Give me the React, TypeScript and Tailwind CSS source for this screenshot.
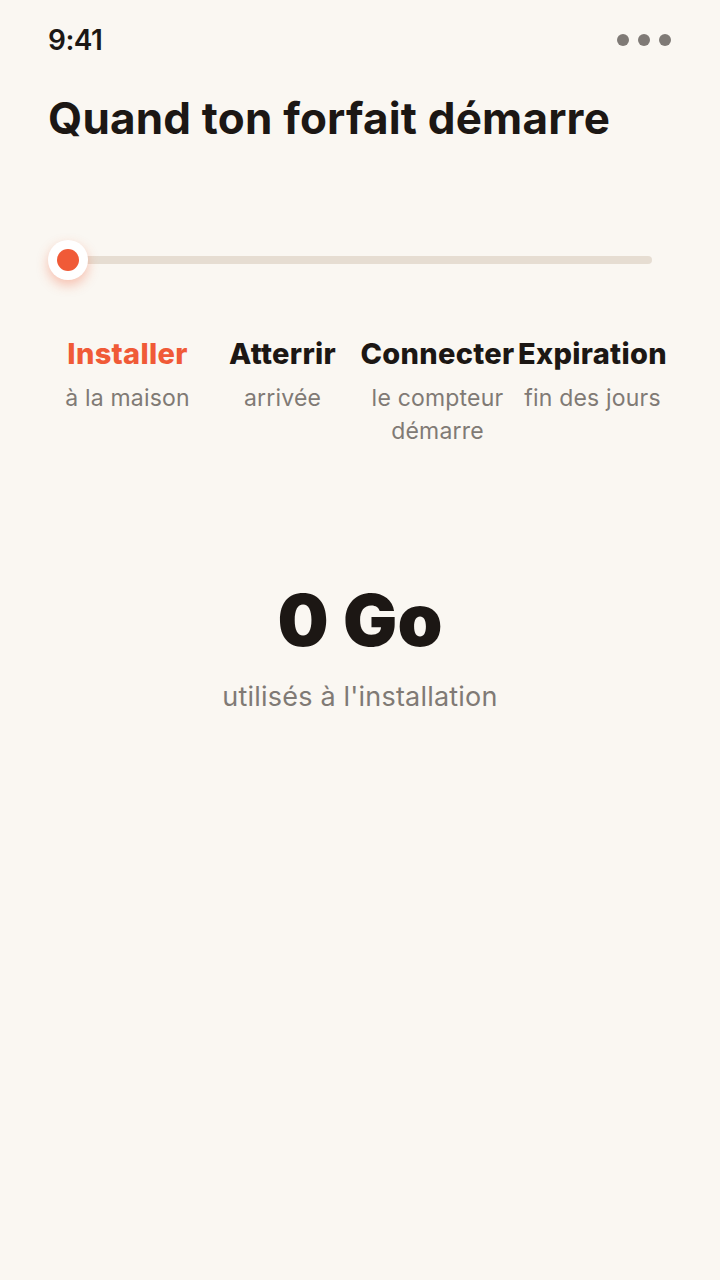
const steps = [
  { title: 'Installer', sub: 'à la maison', active: true },
  { title: 'Atterrir', sub: 'arrivée', active: false },
  { title: 'Connecter', sub: 'le compteur démarre', active: false },
  { title: 'Expiration', sub: 'fin des jours', active: false },
]

export default function App() {
  return (
    <div
      className="min-h-screen w-[720px] bg-[#faf7f2] text-[#1c1714]"
      style={{ fontFamily: 'Inter, Roboto, "Liberation Sans", sans-serif' }}
    >
      {/* Status bar */}
      <div className="flex items-center justify-between px-12 pt-[22px] h-[58px]">
        <span className="text-[28px] font-semibold tracking-[-0.5px] leading-none">9:41</span>
        <div className="flex gap-[9px] pr-[1px]">
          <span className="w-[12px] h-[12px] rounded-full bg-[#7f7a76]" />
          <span className="w-[12px] h-[12px] rounded-full bg-[#7f7a76]" />
          <span className="w-[12px] h-[12px] rounded-full bg-[#7f7a76]" />
        </div>
      </div>

      {/* Title */}
      <h1 className="px-12 mt-[38px] text-[44px] font-bold tracking-[0.2px] leading-none whitespace-nowrap">
        Quand ton forfait démarre
      </h1>

      {/* Timeline slider */}
      <div className="px-12 mt-[98px]">
        <div className="relative h-[44px] flex items-center">
          <div className="ml-[20px] mr-[20px] h-[8px] flex-1 rounded-full bg-[#e6ddd2]" />
          <div className="absolute left-0 top-[2px] w-[40px] h-[40px] rounded-full bg-white flex items-center justify-center shadow-[0_5px_12px_rgba(240,90,50,0.35)]">
            <span className="w-[22px] h-[22px] rounded-full bg-[#f05a37]" />
          </div>
        </div>
      </div>

      {/* Step labels */}
      <div className="grid grid-cols-4 mx-[50px] w-[620px] mt-[54px]">
        {steps.map((s) => (
          <div key={s.title} className="flex flex-col items-center text-center">
            <span
              className={`text-[29px] font-extrabold leading-[36px] tracking-[0.3px] whitespace-nowrap ${
                s.active ? 'text-[#f05a37]' : 'text-[#1c1714]'
              }`}
            >
              {s.title}
            </span>
            <span className="mt-[10px] w-[152px] text-[23px] leading-[33px] tracking-[0.2px] text-[#807a75]">
              {s.sub}
            </span>
          </div>
        ))}
      </div>

      {/* Usage summary */}
      <div className="flex flex-col items-center mt-[136px]">
        <span className="text-[72px] font-black leading-none tracking-[0px]">0 Go</span>
        <span className="mt-[27px] text-[27px] text-[#807a75] leading-none tracking-[0.2px]">
          utilisés à l'installation
        </span>
      </div>
    </div>
  )
}
